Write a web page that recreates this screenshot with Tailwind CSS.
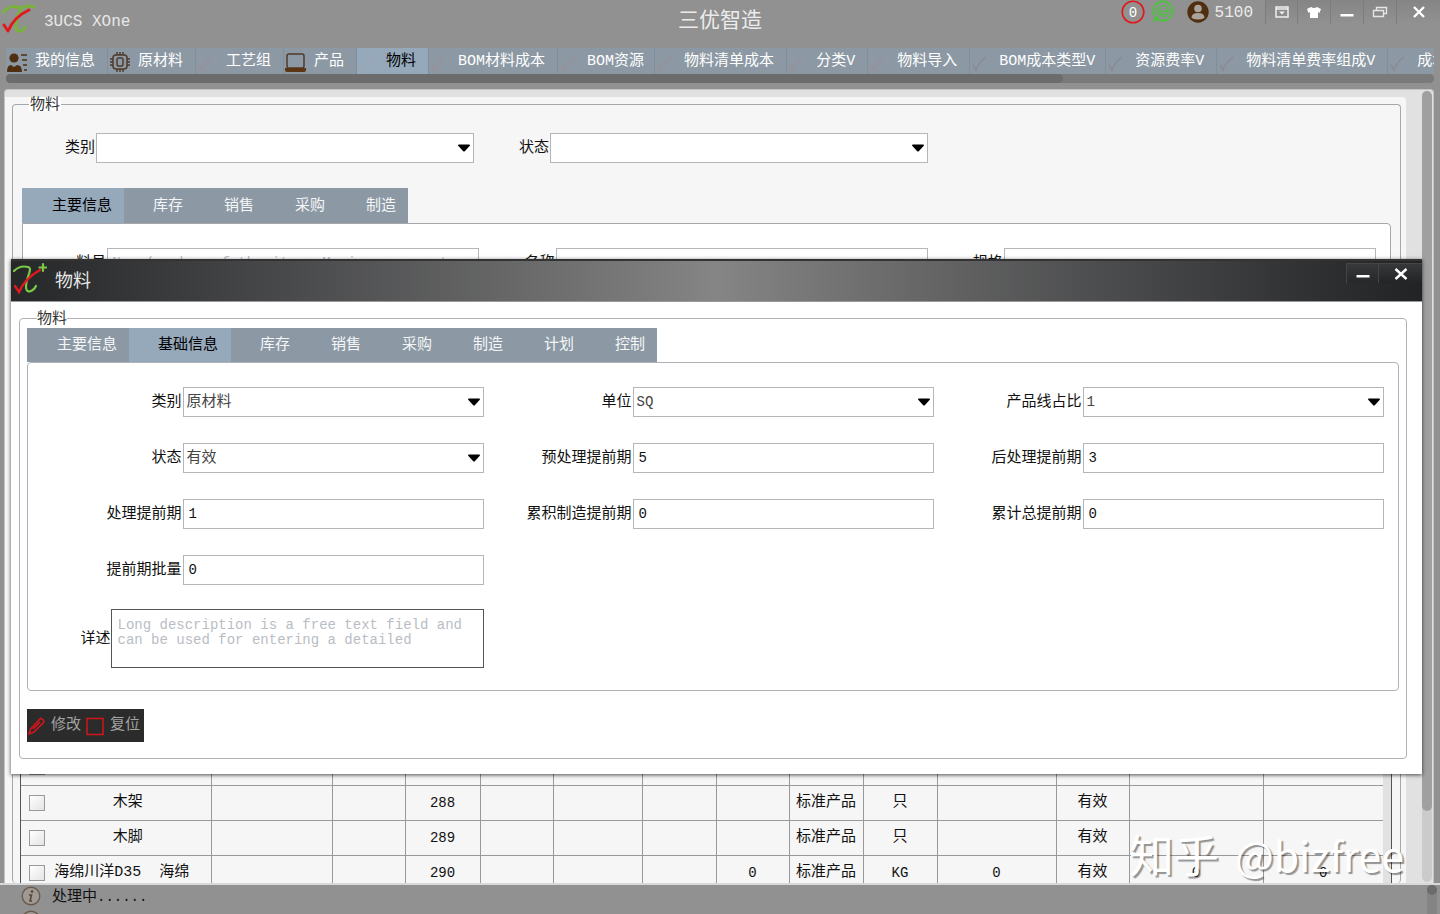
<!DOCTYPE html>
<html lang="zh-CN">
<head>
<meta charset="utf-8">
<title>3UCS XOne 三优智造</title>
<script src="https://cdn.jsdelivr.net/npm/@tailwindcss/browser@4"></script>
</head>
<body class="bg-[#919191]">
<svg class="hidden" aria-hidden="true">
  <symbol id="tick" viewBox="0 0 20 20"><path d="M3 13l3 5C8 12 11 9 16 5" fill="none" stroke="currentColor" stroke-width="1.5"/></symbol>
  <symbol id="caret" viewBox="0 0 12 8"><path d="M0 1.5Q0 .5 1 .5h10q1 0 1 1L7 7q-1 1-2 0z" fill="#000"/></symbol>
  <symbol id="info" viewBox="0 0 20 20"><circle cx="10" cy="10" r="8.8" fill="#a09a94" stroke="#6b5a4c" stroke-width="1.4"/><circle cx="11" cy="5.6" r="1.3" fill="#5b4636"/><path d="M8 9h2.500l-1.500 6h2" fill="none" stroke="#5b4636" stroke-width="1.600"/></symbol>
</svg>
<div class="relative flex h-screen flex-col overflow-hidden font-['Liberation_Mono','Noto_Sans_CJK_SC',monospace] text-[15px] leading-5 text-[#111] [&_label]:pt-0.5">

  <header class="grid h-12 shrink-0 grid-cols-[1fr_auto_1fr]">
    <div class="flex items-start gap-2">
      <svg class="h-9 w-9" viewBox="0 0 36 36" fill="none" stroke-linecap="round" stroke-linejoin="round"><path d="M3 12C7 8 13 5.500 18 7c4 1 1 6-1 12-2 8-2 12 3 12 2 0 4-2 5-4M20 9c4-3 9-4 14-2" stroke="#79b33c" stroke-width="3"/><path d="M4 25l4 6C11 24 18 15 29 10" stroke="#e01a1f" stroke-width="3"/></svg>
      <span class="mt-3 text-base leading-5 text-[#e8e8e8]">3UCS XOne</span>
    </div>
    <h1 class="pt-2 text-[21px] leading-7 text-[#ececec]">三优智造</h1>
    <div class="flex items-start justify-end">
      <svg class="mr-1.5 h-6 w-6" viewBox="0 0 24 24"><circle cx="12" cy="12" r="10.800" fill="none" stroke="#e0191c" stroke-width="1.600"/><text x="12" y="17" text-anchor="middle" font-family="Liberation Mono" font-size="14" fill="#fff">0</text></svg>
      <svg class="mr-3 h-6 w-6" viewBox="0 0 24 24" fill="none" stroke="#4cc23f"><circle cx="12" cy="11" r="9.500" stroke-width="2.500" stroke-dasharray="4 1"/><path d="M4 17l-1 4 5-2" stroke-width="1.500"/><circle cx="12" cy="11" r="5.500" stroke-width="1.200"/><path d="M6 11h12M9 8v1m6-1v1M9 13q3 3 6 0" stroke-width="1.500"/></svg>
      <svg class="mr-1.5 h-6 w-[22px]" viewBox="0 0 22 24"><circle cx="11" cy="12" r="10.700" fill="#4f2f10"/><circle cx="11" cy="8.500" r="3.800" fill="#aaa29b"/><path d="M4.500 18q0-5 6.500-5t6.500 5q-3 1.500-6.500 1.500T4.500 18" fill="#aaa29b"/></svg>
      <span class="mr-3 mt-[3px] text-base leading-5 text-[#ececec]">5100</span>
      <button aria-label="菜单" class="flex h-6 w-8 items-center justify-center border-l border-[#7d7d7d] bg-linear-to-b from-[#858585] to-[#919191]"><svg class="h-4 w-4" viewBox="0 0 16 16"><path d="M2 3h12v10H2zM2 5h12" fill="none" stroke="#eee" stroke-width="1.500"/><path d="M5 7.500h6l-3 3z" fill="#eee"/></svg></button>
      <button aria-label="主题" class="flex h-6 w-[33px] items-center justify-center border-l border-[#7d7d7d] bg-linear-to-b from-[#858585] to-[#919191]"><svg class="h-4 w-4" viewBox="0 0 16 16"><path d="M5 3q3 2 6 0l4 2-1.500 4L12 8v6H4V8l-1.500 1L1 5z" fill="#fff"/></svg></button>
      <button aria-label="最小化" class="flex h-6 w-[33px] items-center justify-center border-l border-[#7d7d7d] bg-linear-to-b from-[#858585] to-[#919191]"><svg class="h-4 w-4" viewBox="0 0 16 16"><path d="M1.500 10h13v2.500h-13z" fill="#fff"/></svg></button>
      <button aria-label="还原" class="flex h-6 w-[33px] items-center justify-center border-l border-[#7d7d7d] bg-linear-to-b from-[#858585] to-[#919191]"><svg class="h-4 w-4" viewBox="0 0 16 16" fill="none" stroke="#e6e6e6" stroke-width="1.400"><path d="M4.500 6.500v-3h10v6h-3M1.500 6.500h10v6h-10z"/></svg></button>
      <button aria-label="关闭" class="flex h-6 w-11 items-center justify-center border-l border-[#7d7d7d] bg-linear-to-b from-[#858585] to-[#919191]"><svg class="h-4 w-4" viewBox="0 0 16 16"><path d="M3 3l10 10M13 3L3 13" stroke="#fff" stroke-width="2.400"/></svg></button>
    </div>
  </header>

  <nav class="mx-1.5 flex h-[26px] shrink-0 overflow-hidden whitespace-nowrap bg-[#8c99a4] text-white [&>button]:pt-0.5">
    <button class="flex shrink-0 items-center border-r border-[#828e99] pr-3"><svg class="mr-[7px] h-[22px] w-[22px]" viewBox="0 0 22 22" fill="#4f2f10"><circle cx="8" cy="7" r="4.600"/><path d="M1 21q0-7 4-7l3 2 3-2q5 0 5 7z"/><path d="M15 4h6M16 9h5M17 14h4M18 19h3" stroke="#4f2f10" stroke-width="1.600"/></svg>我的信息</button>
    <button class="flex shrink-0 items-center border-r border-[#828e99] pr-3"><svg class="mr-[7px] ml-px h-[22px] w-[22px]" viewBox="0 0 22 22" fill="none" stroke="#4f3a2a" stroke-width="1.500"><rect x="4" y="4" width="14" height="14" rx="3"/><rect x="8" y="7" width="6" height="8" rx="1.500"/><path d="M8 1v3m3-3v3m3-3v3M8 18v3m3-3v3m3-3v3M1 8h3m-3 3h3m-3 3h3M18 8h3m-3 3h3m-3 3h3"/></svg>原材料</button>
    <button class="flex shrink-0 items-center border-r border-[#828e99] pr-3"><svg class="mr-2.5 h-5 w-5 text-[#9a8f98]"><use href="#tick"/></svg>工艺组</button>
    <button class="flex shrink-0 items-center border-r border-[#828e99] pr-3"><svg class="mr-2 ml-px h-[22px] w-[21px]" viewBox="0 0 21 22"><rect x="2" y="3" width="17" height="14" rx="2" fill="none" stroke="#4f3a2a" stroke-width="1.500"/><path d="M0 17h21v2q0 2-2 2H2q-2 0-2-2z" fill="#5c3413"/></svg>产品</button>
    <button class="flex shrink-0 items-center border-r border-[#828e99] bg-[#96a9bb] pr-3 text-black"><svg class="mr-[9px] h-5 w-5 text-[#a0a5b3]"><use href="#tick"/></svg>物料</button>
    <button class="flex shrink-0 items-center border-r border-[#828e99] pr-3"><svg class="mr-[9px] h-5 w-5 text-[#9a8f98]"><use href="#tick"/></svg>BOM材料成本</button>
    <button class="flex shrink-0 items-center border-r border-[#828e99] pr-2.5"><svg class="mr-[9px] h-5 w-5 text-[#9a8f98]"><use href="#tick"/></svg>BOM资源</button>
    <button class="flex shrink-0 items-center border-r border-[#828e99] pr-3"><svg class="mr-[9px] h-5 w-5 text-[#9a8f98]"><use href="#tick"/></svg>物料清单成本</button>
    <button class="flex shrink-0 items-center border-r border-[#828e99] pr-3"><svg class="mr-[9px] h-5 w-5 text-[#9a8f98]"><use href="#tick"/></svg>分类V</button>
    <button class="flex shrink-0 items-center border-r border-[#828e99] pr-3"><svg class="mr-[9px] h-5 w-5 text-[#9a8f98]"><use href="#tick"/></svg>物料导入</button>
    <button class="flex shrink-0 items-center border-r border-[#828e99] pr-2.5"><svg class="mr-[9px] h-5 w-5 text-[#8a8a93]"><use href="#tick"/></svg>BOM成本类型V</button>
    <button class="flex shrink-0 items-center border-r border-[#828e99] pr-3"><svg class="mr-[9px] h-5 w-5 text-[#8a8a93]"><use href="#tick"/></svg>资源费率V</button>
    <button class="flex shrink-0 items-center border-r border-[#828e99] pr-3"><svg class="mr-[9px] h-5 w-5 text-[#8a8a93]"><use href="#tick"/></svg>物料清单费率组成V</button>
    <button class="flex shrink-0 items-center pr-3"><svg class="mr-[9px] h-5 w-5 text-[#8a8a93]"><use href="#tick"/></svg>成本</button>
  </nav>
  <div class="mx-1.5 h-[9px] shrink-0 rounded-full bg-[#7a7a7a]"><div class="h-full w-[74%] rounded-full bg-[#6c6c6c]"></div></div>

  <main class="ml-1 mr-1.5 mt-1.5 flex min-h-0 flex-1 overflow-hidden rounded-t-sm border-x border-t border-[#c4c4c4] bg-[#e1e1e1]">
    <div class="mt-[7px] flex min-w-0 flex-1 flex-col rounded-tr bg-[#f6f6f6] pl-[7px] pr-[5px]">
      <fieldset class="h-full min-w-0 rounded border border-b-0 border-[#a5a7ac]">
        <legend class="ml-4 h-3.5 bg-white px-px leading-[18px] text-[#333]">物料</legend>
        <div class="flex h-full flex-col">
        <div class="mt-[22px] flex pl-[52px]">
          <div class="flex w-[34%] items-center gap-px">
            <label for="f-cat" class="w-[30px] shrink-0">类别</label>
            <div class="relative h-[30px] w-[378px]"><select id="f-cat" class="h-full w-full appearance-none border border-[#b4b6ba] bg-white px-1"><option></option></select><svg class="pointer-events-none absolute right-1 top-[11px] h-2 w-3"><use href="#caret"/></svg></div>
          </div>
          <div class="flex items-center gap-px">
            <label for="f-state" class="w-[30px] shrink-0">状态</label>
            <div class="relative h-[30px] w-[378px]"><select id="f-state" class="h-full w-full appearance-none border border-[#b4b6ba] bg-white px-1"><option></option></select><svg class="pointer-events-none absolute right-1 top-[11px] h-2 w-3"><use href="#caret"/></svg></div>
          </div>
        </div>
        <div class="ml-[9px] mt-[25px] flex h-[35px] shrink-0 self-start bg-[#8c99a4] text-[#f4f6f8] [&>button]:pt-0.5">
          <button class="bg-[#96a9bb] pl-[30px] pr-3 text-black">主要信息</button>
          <button class="pl-[29px] pr-3">库存</button>
          <button class="pl-[29px] pr-3">销售</button>
          <button class="pl-[29px] pr-3">采购</button>
          <button class="pl-[29px] pr-3">制造</button>
        </div>
        <div class="mx-[9px] min-h-0 flex-1 rounded-tr border border-[#a5a7ac] bg-white pl-2 pr-3.5 pt-6">
          <div class="grid grid-cols-3">
            <div class="flex items-center justify-end gap-px"><label for="m-no">料号</label><input id="m-no" placeholder="Name(number of the item. Maximum can not" class="h-[30px] w-[83%] border border-[#b4b6ba] px-1 text-sm placeholder:text-[#b9bdc4]"></div>
            <div class="flex items-center justify-end gap-px"><label for="m-name">名称</label><input id="m-name" class="h-[30px] w-[83%] border border-[#b4b6ba] px-1"></div>
            <div class="flex items-center justify-end gap-px"><label for="m-spec">规格</label><input id="m-spec" class="h-[30px] w-[83%] border border-[#b4b6ba] px-1"></div>
          </div>
        </div>
        <div class="ml-[7px] mr-2 h-[133px] shrink-0 overflow-hidden border-x border-[#555] bg-[#e1e1e1] pr-2">
          <table class="w-full table-fixed border-collapse bg-[#f6f6f6] text-center">
            <colgroup><col class="w-[190px]"><col class="w-[121px]"><col class="w-[73px]"><col class="w-[75px]"><col class="w-[73px]"><col class="w-[89px]"><col class="w-[74px]"><col class="w-[73px]"><col class="w-[74px]"><col class="w-[74px]"><col class="w-[119px]"><col class="w-[73px]"><col class="w-[134px]"><col></colgroup>
            <tbody class="[&_td]:border-b [&_td]:border-r [&_td]:border-[#999] [&_td]:p-0 [&_td:last-child]:border-r-0">
              <tr class="h-[35px]"><td><div class="flex items-center pl-2"><input type="checkbox" aria-label="选择木板" class="h-4 w-4 appearance-none border border-[#999] bg-linear-to-br from-white to-[#e4e4e4]"><span class="flex-1">木板</span></div></td><td></td><td></td><td class="text-sm">287</td><td></td><td></td><td></td><td></td><td>原材料</td><td>只</td><td></td><td>有效</td><td></td><td></td></tr>
              <tr class="h-[35px]"><td><div class="flex items-center pl-2"><input type="checkbox" aria-label="选择木架" class="h-4 w-4 appearance-none border border-[#999] bg-linear-to-br from-white to-[#e4e4e4]"><span class="flex-1">木架</span></div></td><td></td><td></td><td class="text-sm">288</td><td></td><td></td><td></td><td></td><td>标准产品</td><td>只</td><td></td><td>有效</td><td></td><td></td></tr>
              <tr class="h-[35px]"><td><div class="flex items-center pl-2"><input type="checkbox" aria-label="选择木脚" class="h-4 w-4 appearance-none border border-[#999] bg-linear-to-br from-white to-[#e4e4e4]"><span class="flex-1">木脚</span></div></td><td></td><td></td><td class="text-sm">289</td><td></td><td></td><td></td><td></td><td>标准产品</td><td>只</td><td></td><td>有效</td><td></td><td></td></tr>
              <tr class="h-[35px]"><td><div class="flex items-center pl-2"><input type="checkbox" aria-label="选择海绵" class="h-4 w-4 appearance-none border border-[#999] bg-linear-to-br from-white to-[#e4e4e4]"><span class="flex-1 whitespace-pre pr-3">海绵川洋D35  海绵</span></div></td><td></td><td></td><td class="text-sm">290</td><td></td><td></td><td></td><td class="text-sm">0</td><td>标准产品</td><td class="text-sm">KG</td><td class="text-sm">0</td><td>有效</td><td class="text-sm">0</td><td class="text-sm">0</td></tr>
            </tbody>
          </table>
        </div>
        </div>
      </fieldset>
    </div>
    <div class="flex w-[27px] justify-end pb-px pr-px pt-px"><div class="w-2.5 rounded-full bg-[#cbcbcb]"><div class="h-[91%] rounded-full bg-[#a0a0a0]"></div></div></div>
  </main>

  <footer class="flex h-[31px] shrink-0 items-start overflow-hidden border-t-2 border-[#d8d8d8] pl-[21px] pr-[3px]">
    <div class="flex flex-col gap-1 pt-px"><svg class="h-5 w-5"><use href="#info"/></svg><svg class="h-5 w-5"><use href="#info"/></svg></div>
    <p class="ml-[11px] flex-1 pt-0.5">处理中<span class="text-sm">......</span></p>
    <div class="h-full w-2.5 rounded-t-full bg-[#848484]"><div class="h-2.5 rounded-full bg-[#6c6c6c]"></div></div>
  </footer>

  <section role="dialog" aria-labelledby="dlg-title" class="absolute left-[11px] right-[18px] top-[259px] bg-white shadow-[0_1px_4px_rgba(0,0,0,0.7)]">
    <div class="flex h-[43px] items-start border-b border-t-2 border-b-[#999] border-t-[#333] bg-linear-to-r from-[#262729] via-[#858585] to-[#222325]">
      <svg class="h-9 w-9" viewBox="0 0 36 36" fill="none" stroke-linecap="round"><path d="M3 10C8 5 13 5 17 6c4 1 1 6-1 13-2 8-1 13 4 11 3-1 4-3 5-5M32 3v7M28.500 6.500h7" stroke="#7ac943" stroke-width="2.200"/><path d="M4 25l4 6C12 22 18 15 29 9" stroke="#e01a1f" stroke-width="2.400"/></svg>
      <h2 id="dlg-title" class="ml-2 mt-2 text-lg leading-[26px] text-[#e8e8e8]">物料</h2>
      <button aria-label="最小化" class="ml-auto mt-0.5 flex h-5 w-8 items-center justify-center border-l border-t border-[#444547] bg-linear-to-b from-[#37383a] to-[#27282a]"><svg class="h-4 w-4" viewBox="0 0 16 16"><path d="M1.500 9h13v2.500h-13z" fill="#fff"/></svg></button>
      <button aria-label="关闭" class="mt-0.5 flex h-5 w-11 items-center justify-center border-l border-t border-[#444547] bg-linear-to-b from-[#37383a] to-[#232426]"><svg class="h-4 w-4" viewBox="0 0 16 16"><path d="M2.500 3l11 10M13.500 3l-11 10" stroke="#fff" stroke-width="2.400"/></svg></button>
    </div>
    <div class="pb-[15px] pl-2 pr-[15px] pt-2">
      <fieldset class="min-w-0 rounded-sm border border-[#b0b2b7] px-[7px] pb-4">
        <legend class="ml-2.5 h-4 leading-5 text-[#333]">物料</legend>
        <div class="mt-0.5 flex h-[34px] w-fit bg-[#8c99a4] text-[#f4f6f8] [&>button]:pt-0.5">
          <button class="pl-[30px] pr-3">主要信息</button>
          <button class="bg-[#96a9bb] pl-[29px] pr-[13px] text-black">基础信息</button>
          <button class="pl-[29px] pr-3">库存</button>
          <button class="pl-[29px] pr-3">销售</button>
          <button class="pl-[29px] pr-3">采购</button>
          <button class="pl-[29px] pr-3">制造</button>
          <button class="pl-[29px] pr-3">计划</button>
          <button class="pl-[29px] pr-3">控制</button>
        </div>
        <div class="rounded-sm border border-[#b0b2b7] pb-[22px] pl-1.5 pr-3.5 pt-6">
          <div class="grid grid-cols-3 gap-y-[26px]">
            <div class="flex items-center justify-end gap-px"><label for="d1">类别</label><div class="relative h-[30px] w-[67%]"><select id="d1" class="h-full w-full appearance-none border border-[#b4b6ba] bg-white px-[3px] pt-0.5 text-[#444]"><option>原材料</option></select><svg class="pointer-events-none absolute right-1 top-[11px] h-2 w-3"><use href="#caret"/></svg></div></div>
            <div class="flex items-center justify-end gap-px"><label for="d2">单位</label><div class="relative h-[30px] w-[67%]"><select id="d2" class="h-full w-full appearance-none border border-[#b4b6ba] bg-white px-[3px] text-sm text-[#444]"><option>SQ</option></select><svg class="pointer-events-none absolute right-1 top-[11px] h-2 w-3"><use href="#caret"/></svg></div></div>
            <div class="flex items-center justify-end gap-px"><label for="d3">产品线占比</label><div class="relative h-[30px] w-[67%]"><select id="d3" class="h-full w-full appearance-none border border-[#b4b6ba] bg-white px-[3px] text-sm text-[#444]"><option>1</option></select><svg class="pointer-events-none absolute right-1 top-[11px] h-2 w-3"><use href="#caret"/></svg></div></div>
            <div class="flex items-center justify-end gap-px"><label for="d4">状态</label><div class="relative h-[30px] w-[67%]"><select id="d4" class="h-full w-full appearance-none border border-[#b4b6ba] bg-white px-[3px] pt-0.5 text-[#444]"><option>有效</option></select><svg class="pointer-events-none absolute right-1 top-[11px] h-2 w-3"><use href="#caret"/></svg></div></div>
            <div class="flex items-center justify-end gap-px"><label for="d5">预处理提前期</label><input id="d5" value="5" class="h-[30px] w-[67%] border border-[#b4b6ba] px-[5px] text-sm"></div>
            <div class="flex items-center justify-end gap-px"><label for="d6">后处理提前期</label><input id="d6" value="3" class="h-[30px] w-[67%] border border-[#b4b6ba] px-[5px] text-sm"></div>
            <div class="flex items-center justify-end gap-px"><label for="d7">处理提前期</label><input id="d7" value="1" class="h-[30px] w-[67%] border border-[#b4b6ba] px-[5px] text-sm"></div>
            <div class="flex items-center justify-end gap-px"><label for="d8">累积制造提前期</label><input id="d8" value="0" class="h-[30px] w-[67%] border border-[#b4b6ba] px-[5px] text-sm"></div>
            <div class="flex items-center justify-end gap-px"><label for="d9">累计总提前期</label><input id="d9" value="0" class="h-[30px] w-[67%] border border-[#b4b6ba] px-[5px] text-sm"></div>
            <div class="flex items-center justify-end gap-px"><label for="d10">提前期批量</label><input id="d10" value="0" class="h-[30px] w-[67%] border border-[#b4b6ba] px-[5px] text-sm"></div>
          </div>
          <div class="mt-6 flex w-1/3 items-center justify-end"><label for="d11">详述</label><textarea id="d11" class="block h-[59px] w-[83%] resize-none border border-[#555] px-1.5 py-2 text-sm leading-[15px] placeholder:text-[#b9bdc4]" placeholder="Long description is a free text field and can be used for entering a detailed"></textarea></div>
        </div>
        <div class="mt-[18px] flex h-[33px] w-fit bg-[#2b2b2b] text-[#a3a3a3]">
          <button class="flex items-center gap-[5px]"><svg class="h-5 w-[19px]" viewBox="0 0 19 20" fill="none" stroke="#d3161b" stroke-width="1.700" stroke-linejoin="round"><path d="M2 18l1.500-5L13 3q1-1 2 0l1.500 1.500q1 1 0 2L7 16zM6 13l7-7"/></svg>修改</button>
          <button class="flex items-center gap-[5px] pl-1 pr-1"><svg class="h-5 w-5" viewBox="0 0 20 20"><rect x="2" y="2.500" width="16" height="16" fill="none" stroke="#d3161b" stroke-width="1.500"/></svg>复位</button>
        </div>
      </fieldset>
    </div>
  </section>

  <p class="pointer-events-none absolute bottom-[30px] right-9 flex gap-4 font-['Noto_Sans_CJK_SC',sans-serif] text-[42px] leading-[60px] text-white [text-shadow:2px_2px_1px_rgba(0,0,0,0.4)]"><span class="text-[45px]">知乎</span><span class="text-[41px]">@bizfree</span></p>
</div>
</body>
</html>
